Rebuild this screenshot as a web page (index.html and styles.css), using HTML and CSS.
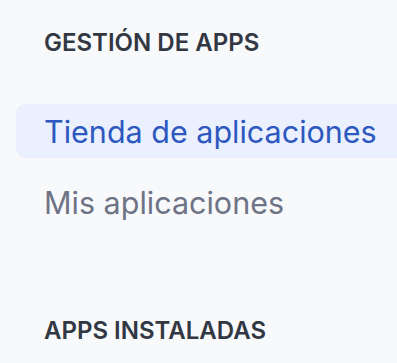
FILE: index.html
```html
<!DOCTYPE html>
<html lang="es">
<head>
    <meta charset="UTF-8">
    <meta name="viewport" content="width=device-width, initial-scale=1.0">
    <title>Gestión de apps</title>
    <link rel="stylesheet" href="styles.css">
</head>
<body>
    <nav class="sidebar">
        <h3 class="section-title">GESTIÓN DE APPS</h3>
        <ul class="menu">
            <li class="menu-item active"><a href="#">Tienda de aplicaciones</a></li>
            <li class="menu-item"><a href="#">Mis aplicaciones</a></li>
        </ul>
        <h3 class="section-title installed">APPS INSTALADAS</h3>
    </nav>
</body>
</html>
```

FILE: styles.css
```css
body {
    font-family: Inter, "Noto Sans", sans-serif;
    background-color: #f8f9fb;
    margin: 0;
    padding: 0;
}
.sidebar {
    padding: 27px 0 0 16px;
}
.section-title {
    margin: 0;
    padding-left: 28px;
    font-size: 24px;
    font-weight: 600;
    line-height: 32px;
    color: #323843;
}
.menu {
    list-style: none;
    margin: 45px 0 0;
    padding: 0;
    display: flex;
    flex-direction: column;
    gap: 17px;
}
.menu-item {
    height: 54px;
    display: flex;
    align-items: center;
    border-radius: 9px 0 0 9px;
}
.menu-item a {
    padding-left: 28px;
    font-size: 30.5px;
    color: #6e7486;
    text-decoration: none;
}
.menu-item.active {
    background: #eaf0fd;
}
.menu-item.active a {
    color: #2d58c0;
}
.installed {
    margin-top: 86px;
}
```
